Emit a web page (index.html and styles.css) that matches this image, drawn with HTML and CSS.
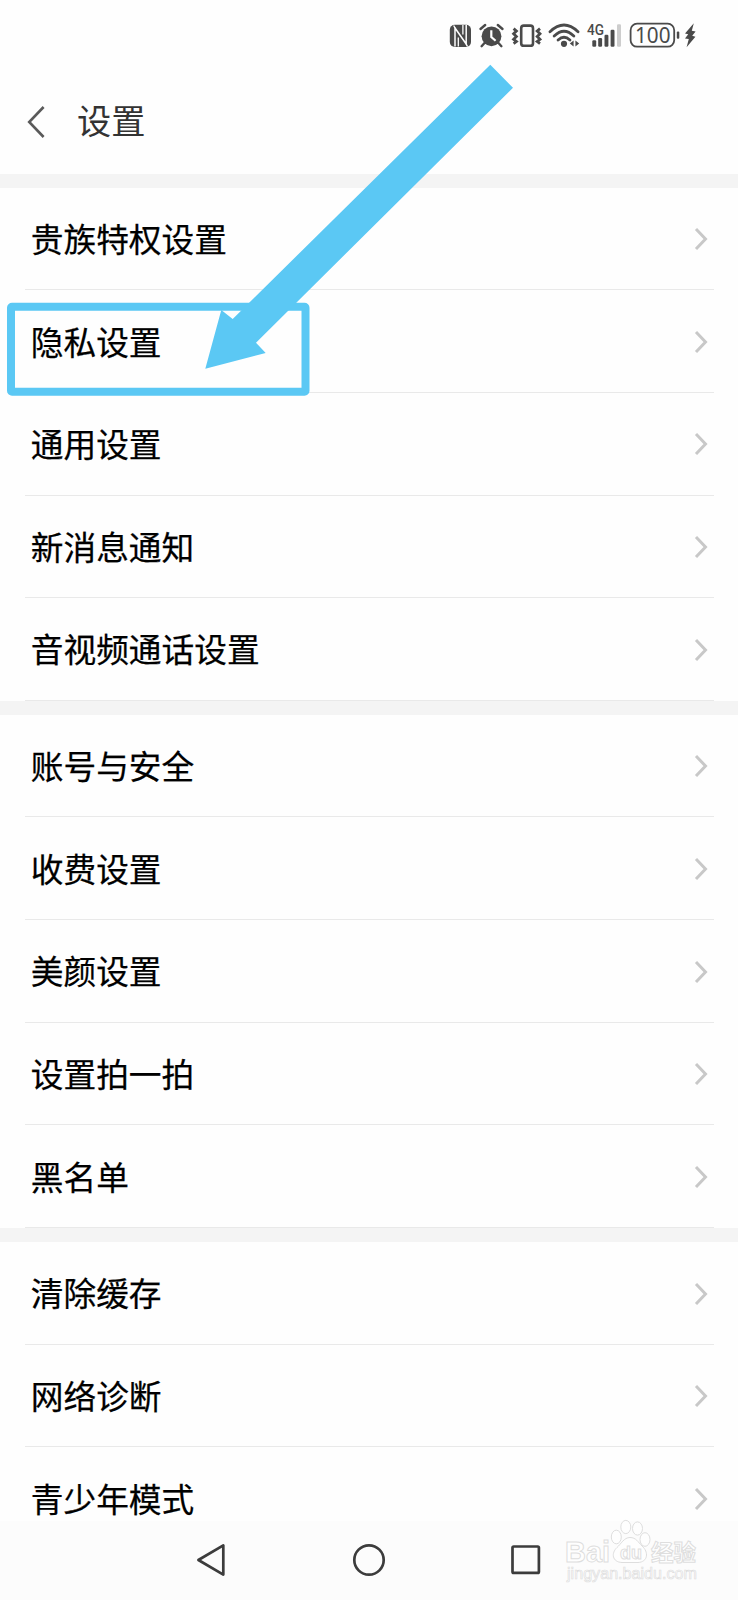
FILE: index.html
```
<!DOCTYPE html>
<html lang="zh-CN">
    <head>
        <meta charset="utf-8">
        <title>设置</title>
        <link rel="stylesheet" href="styles.css">
    </head>
    <body>
        <svg class="defs" width="0" height="0">
            <symbol id="chevron" viewBox="0 0 14 24">
                <path d="M2 2 L11.5 12 L2 22" fill="none" stroke="#c8c8c8" stroke-width="3"/>
            </symbol>
        </svg>
        <div class="screen">
            <div class="statusbar">
                <!-- nfc -->
                <svg width="30" height="30" viewBox="0 0 30 30">
                    <rect x="3.8" y="4.7" width="21.2" height="22.3" rx="5" fill="#4a4a4a"/>
                    <path d="M9 26.5 V8 L20.2 24 V5" fill="none" stroke="#fefefe" stroke-width="1.5"/>
                    <path d="M9 8 L7.6 5.5 M20.2 24 L21.6 26.5" fill="none" stroke="#fefefe" stroke-width="1.3"/>
                    <path d="M12.3 26.5 V17.5 M16.9 14.5 V5" fill="none" stroke="#fefefe" stroke-width="1.3"/>
                </svg>
                <!-- alarm -->
                <svg width="32" height="30" viewBox="0 0 32 30">
                    <circle cx="15.5" cy="16.3" r="9.9" fill="#4a4a4a"/>
                    <path d="M4.5 9 L9.2 5 M21.8 5 L26.5 9 M8.5 23 L5.6 26.2 M22.5 23 L25.4 26.2" fill="none" stroke="#4a4a4a" stroke-width="2.4" stroke-linecap="round"/>
                    <path d="M15.3 10.3 V17 L19.6 20.8" fill="none" stroke="#fefefe" stroke-width="2.2"/>
                </svg>
                <!-- vibrate -->
                <svg width="36" height="30" viewBox="0 0 36 30" fill="none" stroke="#4a4a4a">
                    <rect x="13.2" y="5.6" width="11.8" height="20.2" rx="2.6" stroke-width="2.6"/>
                    <path d="M5.6 8.6 L8.4 11 L5.6 13.7 L8.4 16.5 L5.6 19.3 L8.4 21.5 L5.6 23.6" stroke-width="2.8"/>
                    <path d="M32 8.6 L29.2 11 L32 13.7 L29.2 16.5 L32 19.3 L29.2 21.5 L32 23.6" stroke-width="2.8"/>
                </svg>
                <!-- wifi -->
                <svg width="40" height="30" viewBox="0 0 40 30">
                    <path d="M6 11.7 Q20 -1.7 34 11.7 M10.2 16 Q20 6.6 29.8 16 M14.1 20 Q20 14.5 25.9 20" fill="none" stroke="#4a4a4a" stroke-width="2.8" stroke-linecap="round"/>
                    <circle cx="20" cy="23.8" r="3.1" fill="#4a4a4a"/>
                    <path d="M29.6 20.6 V26.6 L25.8 23.6 Z M31.4 20.6 V26.6 L35.2 23.6 Z" fill="#4a4a4a"/>
                </svg>
                <!-- signal -->
                <svg width="42" height="30" viewBox="0 0 42 30">
                    <text class="net" x="3" y="15" textLength="17" lengthAdjust="spacingAndGlyphs">4G</text>
                    <g fill="#4a4a4a">
                        <rect x="8.3" y="20.2" width="3.9" height="6.5" rx="1.2"/>
                        <rect x="14.2" y="18" width="3.9" height="8.7" rx="1.2"/>
                        <rect x="20.5" y="14.7" width="3.9" height="12" rx="1.2"/>
                        <rect x="26.6" y="9.8" width="3.9" height="16.9" rx="1.2"/>
                    </g>
                    <rect x="33" y="4.2" width="4" height="22.5" rx="1.2" fill="#cdcdcd"/>
                </svg>
                <!-- battery -->
                <svg width="56" height="30" viewBox="0 0 56 30">
                    <rect x="4.6" y="3.7" width="43.6" height="23" rx="6.5" fill="none" stroke="#4a4a4a" stroke-width="1.8"/>
                    <text class="level" x="9" y="23.2" textLength="35.5" lengthAdjust="spacingAndGlyphs">100</text>
                    <rect x="50.8" y="11.6" width="2.5" height="7.2" rx="1" fill="#4a4a4a"/>
                </svg>
                <!-- charging -->
                <svg width="18" height="30" viewBox="0 0 18 30">
                    <path d="M11.8 3.2 L3 13.4 L6.2 14.2 L3 18.4 L6.8 19 L4.6 27.2 L13.4 16.8 L10.2 15.8 L13.6 11.6 L9.8 10.8 Z" fill="#4a4a4a"/>
                </svg>
            </div>

            <div class="header">
                <svg class="back" width="20" height="34" viewBox="0 0 20 34">
                    <path d="M17.6 2 L3.2 17 L17.6 32" fill="none" stroke="#5a5a5a" stroke-width="2.6"/>
                </svg>
                <div class="title">设置</div>
            </div>

            <div class="content">
                <div class="group">
                    <div class="row"><span>贵族特权设置</span><svg class="arrow"><use href="#chevron"/></svg></div>
                    <div class="row"><span>隐私设置</span><svg class="arrow"><use href="#chevron"/></svg></div>
                    <div class="row"><span>通用设置</span><svg class="arrow"><use href="#chevron"/></svg></div>
                    <div class="row"><span>新消息通知</span><svg class="arrow"><use href="#chevron"/></svg></div>
                    <div class="row"><span>音视频通话设置</span><svg class="arrow"><use href="#chevron"/></svg></div>
                </div>
                <div class="group">
                    <div class="row"><span>账号与安全</span><svg class="arrow"><use href="#chevron"/></svg></div>
                    <div class="row"><span>收费设置</span><svg class="arrow"><use href="#chevron"/></svg></div>
                    <div class="row"><span>美颜设置</span><svg class="arrow"><use href="#chevron"/></svg></div>
                    <div class="row"><span>设置拍一拍</span><svg class="arrow"><use href="#chevron"/></svg></div>
                    <div class="row"><span>黑名单</span><svg class="arrow"><use href="#chevron"/></svg></div>
                </div>
                <div class="group">
                    <div class="row"><span>清除缓存</span><svg class="arrow"><use href="#chevron"/></svg></div>
                    <div class="row"><span>网络诊断</span><svg class="arrow"><use href="#chevron"/></svg></div>
                    <div class="row"><span>青少年模式</span><svg class="arrow"><use href="#chevron"/></svg></div>
                </div>
            </div>

            <div class="navbar">
                <svg width="36" height="36" viewBox="0 0 36 36">
                    <path d="M4.4 18 L29.3 3.4 V32.6 Z"/>
                </svg>
                <svg width="36" height="36" viewBox="0 0 36 36">
                    <circle cx="18" cy="18" r="14.7"/>
                </svg>
                <svg width="36" height="36" viewBox="0 0 36 36">
                    <rect x="4.5" y="4.5" width="26.4" height="26.4" rx="1.2"/>
                </svg>
            </div>

            <!-- highlight box and pointer -->
            <svg class="marker" width="520" height="400" viewBox="0 0 520 400">
                <rect x="11" y="306.7" width="294.5" height="85" rx="1" fill="none" stroke="#5bc8f4" stroke-width="8" stroke-linejoin="round"/>
                <path d="M205.3 368.7 L221.3 310 L232.7 319 L490.3 64.7 L513 87.7 L256 342.7 L265.7 353 Z" fill="#5bc8f4"/>
            </svg>

            <svg class="watermark" width="150" height="70" viewBox="0 0 150 70">
                <text class="wm-latin" x="5" y="45.5" textLength="45" lengthAdjust="spacingAndGlyphs">Bai</text>
                <g class="wm-paw">
                    <ellipse cx="56.3" cy="21" rx="5" ry="6.8"/>
                    <ellipse cx="65.8" cy="11" rx="5" ry="6.6"/>
                    <ellipse cx="77.5" cy="12.5" rx="5" ry="6.6"/>
                    <ellipse cx="85" cy="23.5" rx="5" ry="6.8"/>
                    <path d="M70 21.5 C76 21.5 78 26 82 30 C89 36 88 46 78 46.5 C73 46.5 67 46.5 62 46.5 C52 46 51 37 57 31.5 C61 28 64 21.5 70 21.5 Z"/>
                </g>
                <text class="wm-du" x="60" y="43">du</text>
                <text class="wm-cjk" x="91" y="44.5">经验</text>
                <text class="wm-url" x="7" y="63" textLength="130" lengthAdjust="spacingAndGlyphs">jingyan.baidu.com</text>
            </svg>
        </div>
    </body>
</html>
```
FILE: styles.css
```
body {
    margin: 0;
    background: #fefefe;
    font-family: "Noto Sans CJK SC", "Noto Sans", sans-serif;
}

svg {
    display: block;
    flex: none;
}

.defs {
    position: absolute;
}

.screen {
    position: relative;
    display: flex;
    flex-direction: column;
    width: 738px;
    height: 1600px;
    overflow: hidden;
}

.statusbar {
    display: flex;
    height: 50px;
    padding: 20px 0 0 446px;
    box-sizing: border-box;
}

.net {
    font: 500 15.5px Roboto, sans-serif;
    fill: #4a4a4a;
}

.level {
    font: 22.5px "Noto Sans", sans-serif;
    fill: #4a4a4a;
}

.header {
    display: flex;
    align-items: center;
    height: 123.6px;
    padding: 0 0 0 26px;
    box-sizing: border-box;
}

.back {
    margin-top: 21px;
}

.title {
    margin: 15px 0 0 31px;
    font-size: 34.2px;
    line-height: 40px;
    color: #333;
}

.content {
    flex: 1;
    overflow: hidden;
}

.group {
    border-top: 14.2px solid #f4f4f4;
}

.row {
    display: flex;
    align-items: center;
    justify-content: space-between;
    height: 102.65px;
    margin: 0 24.5px;
    padding: 0 5.5px 0 6.3px;
    box-sizing: border-box;
    border-bottom: 1px solid #e9e9e9;
    font-size: 32.7px;
    line-height: 40px;
    color: #000;
    -webkit-text-stroke: 0.25px #000;
}

.row span {
    margin-bottom: 1px;
}

.arrow {
    width: 14px;
    height: 24px;
    margin-top: 1.4px;
}

.navbar {
    display: flex;
    flex: none;
    gap: 121px;
    height: 79.5px;
    padding: 21.3px 0 0 193.5px;
    box-sizing: border-box;
    background: #fcfcfc;
    fill: none;
    stroke: #3c3c3c;
    stroke-width: 2.7;
    stroke-linejoin: round;
}

.marker {
    position: absolute;
    left: 0;
    top: 0;
}

.watermark {
    position: absolute;
    left: 560px;
    top: 1516px;
    fill: #fefefe;
    stroke: #dedede;
    stroke-width: 1;
}

.wm-latin {
    font: bold 30px "Liberation Sans", sans-serif;
}

.wm-du {
    font: bold 18px "Liberation Sans", sans-serif;
}

.wm-cjk {
    font: bold 22.5px "Noto Sans CJK SC", sans-serif;
}

.wm-url {
    font: 17px "Liberation Sans", sans-serif;
    stroke-width: 0.7;
}
```
